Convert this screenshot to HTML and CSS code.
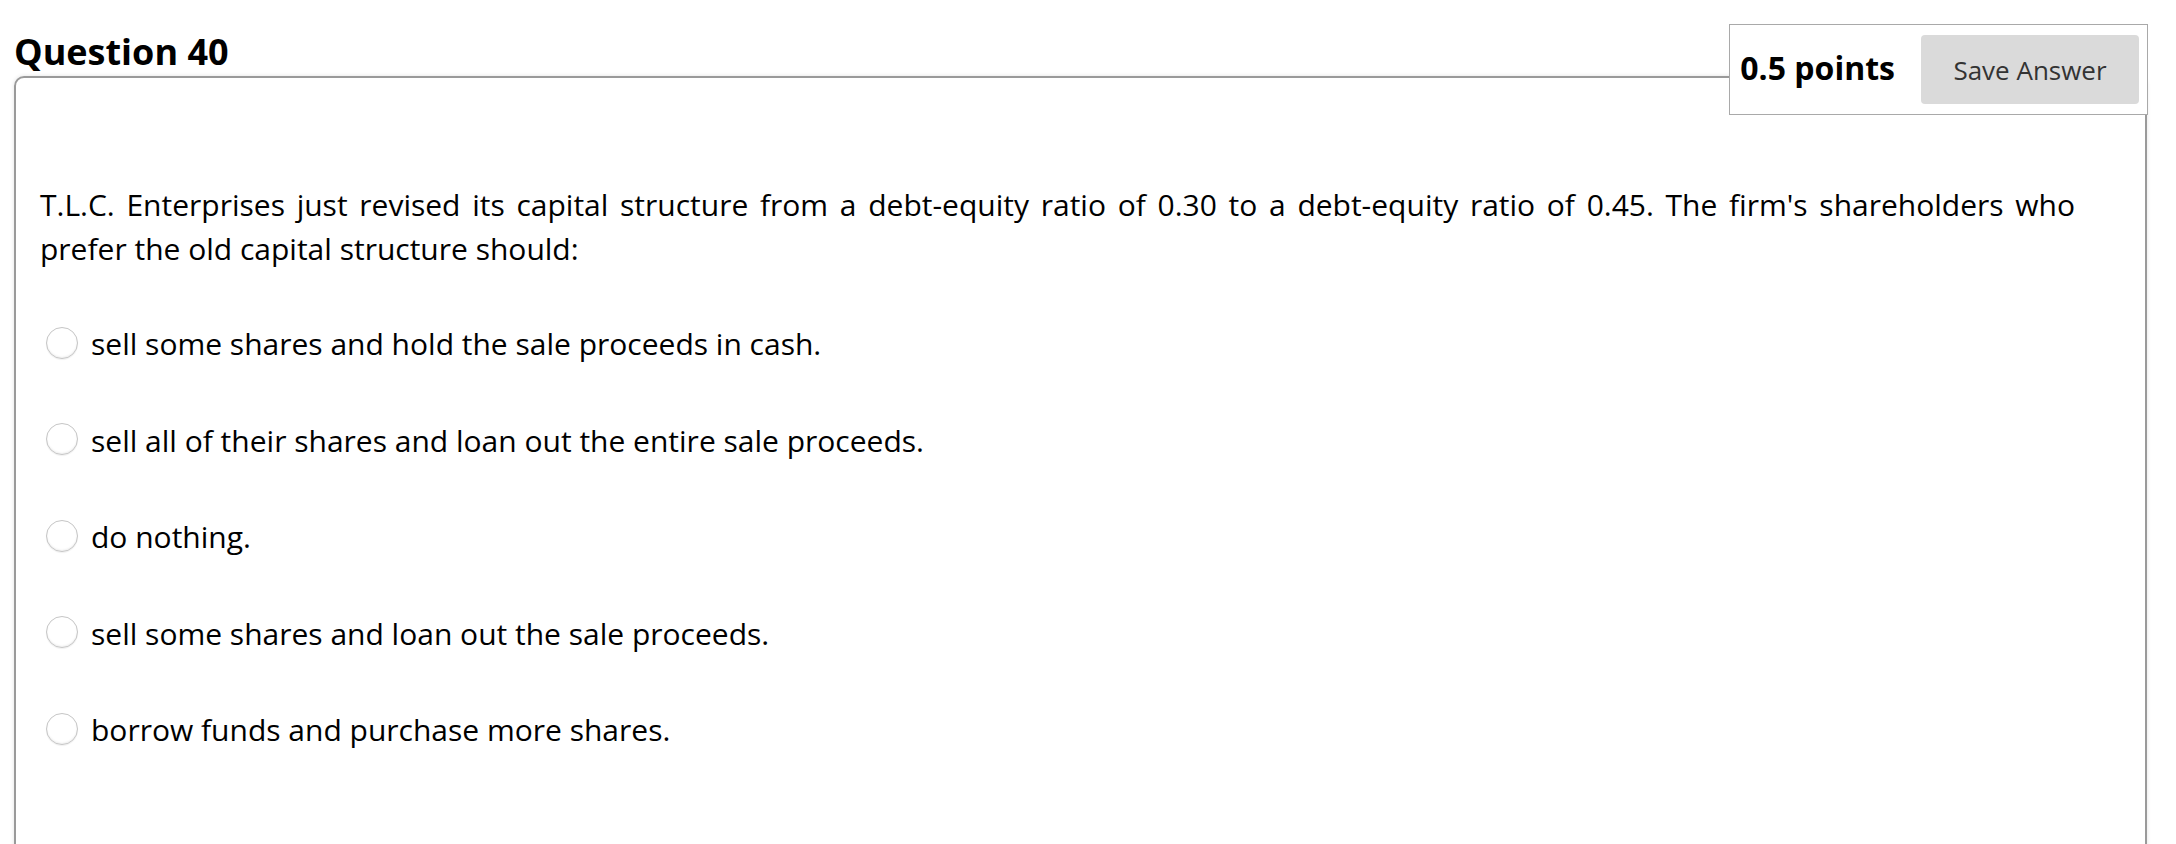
FILE: index.html
```html
<!DOCTYPE html>
<html lang="en">
<head>
<meta charset="utf-8">
<title>Question 40</title>
<link rel="stylesheet" href="styles.css">
</head>
<body>
<div class="question">
  <div class="q-header">
    <h2 class="q-title">Question 40</h2>
    <div class="q-points">
      <span class="points-text">0.5 points</span>
      <button class="save-btn" type="button">Save Answer</button>
    </div>
  </div>
  <div class="q-body">
    <p class="q-text">T.L.C. Enterprises just revised its capital structure from a debt-equity ratio of 0.30 to a debt-equity ratio of 0.45. The firm's shareholders who prefer the old capital structure should:</p>
    <ul class="options">
      <li class="option"><span class="radio"></span><span class="opt-label">sell some shares and hold the sale proceeds in cash.</span></li>
      <li class="option"><span class="radio"></span><span class="opt-label">sell all of their shares and loan out the entire sale proceeds.</span></li>
      <li class="option"><span class="radio"></span><span class="opt-label">do nothing.</span></li>
      <li class="option"><span class="radio"></span><span class="opt-label">sell some shares and loan out the sale proceeds.</span></li>
      <li class="option"><span class="radio"></span><span class="opt-label">borrow funds and purchase more shares.</span></li>
    </ul>
  </div>
</div>
</body>
</html>
```

FILE: styles.css
```css
html, body {
  margin: 0;
  padding: 0;
  background: #ffffff;
  overflow: hidden;
}

body {
  font-family: "Open Sans", "Liberation Sans", sans-serif;
  color: #000000;
}

.question {
  padding: 0 29px 0 14px;
}

.q-header {
  display: flex;
  justify-content: space-between;
  align-items: flex-start;
  padding-top: 24px;
}

.q-title {
  margin: 6px 0 0 0;
  font-size: 36px;
  line-height: 44px;
  font-weight: 700;
}

.q-points {
  position: relative;
  z-index: 1;
  display: flex;
  align-items: center;
  background: #ffffff;
  border: 1px solid #a9a9a9;
  padding: 10px 8px 10px 10px;
  margin-right: -1px;
}

.points-text {
  font-size: 32px;
  font-weight: 700;
  line-height: 40px;
  padding-bottom: 4px;
  margin-right: 26px;
}

.save-btn {
  width: 218px;
  height: 69px;
  border: none;
  border-radius: 4px;
  background: #dadada;
  color: #333333;
  font-family: "Open Sans", "Liberation Sans", sans-serif;
  font-size: 26px;
  padding: 0;
}

.q-body {
  margin-top: -39px;
  border: 2px solid #9a9a9a;
  border-radius: 10px;
  box-shadow: 0 0 4px rgba(0, 0, 0, 0.12);
  padding: 105px 70px 200px 24px;
  min-height: 700px;
}

.q-text {
  margin: 0 0 51px 0;
  font-size: 30px;
  line-height: 44px;
  text-align: justify;
}

.options {
  list-style: none;
  margin: 0 0 0 6px;
  padding: 0;
  display: flex;
  flex-direction: column;
  gap: 52.5px;
}

.option {
  display: flex;
  align-items: center;
  font-size: 30px;
  line-height: 44px;
}

.radio {
  flex: none;
  width: 30px;
  height: 30px;
  border-radius: 50%;
  border: 1px solid #c6c6c6;
  background: #ffffff;
  box-shadow: inset 0 -1px 2px rgba(0, 0, 0, 0.07), 0 1px 1px rgba(0, 0, 0, 0.06);
  margin-right: 13px;
  margin-top: -3px;
}
```
